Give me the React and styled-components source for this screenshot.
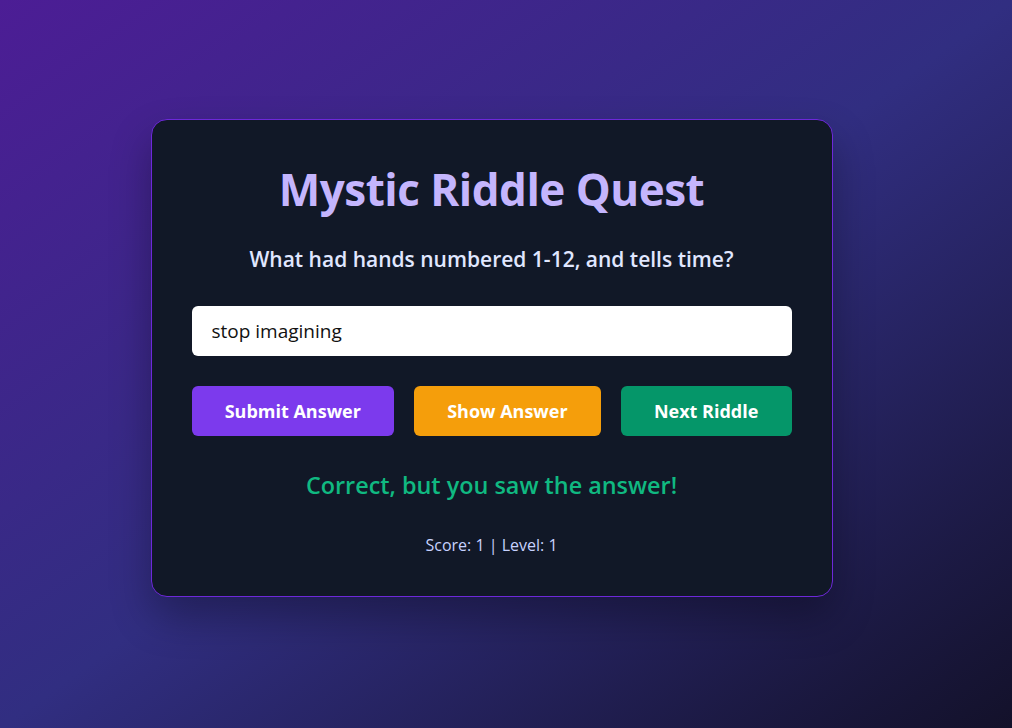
import React, { useState } from "react";
import styled, { createGlobalStyle } from "styled-components";

const GlobalStyle = createGlobalStyle`
	* {
		box-sizing: border-box;
	}
	body {
		margin: 0;
		font-family: "Open Sans", "Noto Sans", sans-serif;
	}
`;

const Page = styled.div`
	min-height: 100vh;
	display: flex;
	align-items: center;
	justify-content: center;
	padding: 0 29px 12px 0;
	background: linear-gradient(to bottom right, #4c1d95 0%, #312e81 50%, #13112a 100%);
`;

const Card = styled.div`
	width: 682px;
	padding: 41px 40px 39px;
	background-color: #111827;
	border: 1px solid #6d28d9;
	border-radius: 16px;
	box-shadow: 0 20px 40px rgba(0, 0, 0, 0.3);
	display: flex;
	flex-direction: column;
	align-items: stretch;
	text-align: center;
`;

const Title = styled.h1`
	margin: 2px 0 29px;
	font-size: 44px;
	line-height: 53px;
	font-weight: 700;
	color: #c4b5fd;
	letter-spacing: -0.5px;
`;

const Question = styled.p`
	margin: 0 0 33px;
	font-size: 21px;
	line-height: 28px;
	font-weight: 600;
	color: #e0e7ff;
`;

const AnswerInput = styled.input`
	width: 100%;
	height: 50px;
	padding: 0 20px;
	border: none;
	border-radius: 6px;
	background: #ffffff;
	font-family: inherit;
	font-size: 19px;
	color: #111111;
	outline: none;
`;

const ButtonRow = styled.div`
	display: flex;
	gap: 20px;
	margin-top: 30px;
`;

const ActionButton = styled.button`
	flex: 1 1 auto;
	height: 50px;
	padding: 0 24px;
	border: none;
	border-radius: 6px;
	background-color: ${({ color }) => color};
	color: #ffffff;
	font-family: inherit;
	font-size: 18px;
	font-weight: 700;
	cursor: pointer;
`;

const Feedback = styled.p`
	margin: 33px 0 0;
	font-size: 23.4px;
	line-height: 32px;
	font-weight: 600;
	color: #10b981;
`;

const Score = styled.p`
	margin: 32px 0 0;
	font-size: 16px;
	line-height: 24px;
	color: #c7d2fe;
`;

function App() {
	const [answer, setAnswer] = useState("stop imagining");
	return (
		<>
			<GlobalStyle />
			<Page>
				<Card>
					<Title>Mystic Riddle Quest</Title>
					<Question>What had hands numbered 1-12, and tells time?</Question>
					<AnswerInput value={answer} onChange={e => setAnswer(e.target.value)} />
					<ButtonRow>
						<ActionButton color="#7c3aed">Submit Answer</ActionButton>
						<ActionButton color="#f59e0b">Show Answer</ActionButton>
						<ActionButton color="#059669">Next Riddle</ActionButton>
					</ButtonRow>
					<Feedback>Correct, but you saw the answer!</Feedback>
					<Score>Score: 1 | Level: 1</Score>
				</Card>
			</Page>
		</>
	);
}

export default App;
